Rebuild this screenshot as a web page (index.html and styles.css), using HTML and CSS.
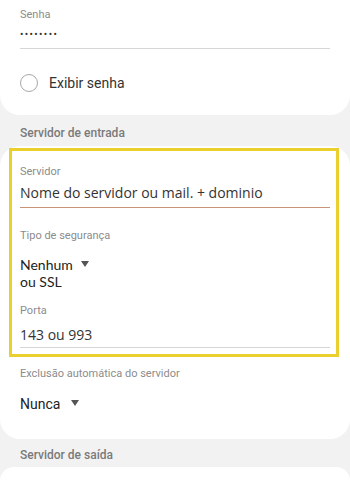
FILE: index.html
```html
<html><head>
  <title>Configurações da conta</title>
  <link rel="stylesheet" href="styles.css">
</head>
<body>
<div class="card topCard">
  <div class="field">
    <div class="label">Senha</div>
    <div class="dots">••••••••</div>
  </div>
  <div class="radioRow">
    <span class="radio"></span>
    <span class="radioText">Exibir senha</span>
  </div>
</div>

<div class="sectionTitle">Servidor de entrada</div>

<div class="card">
  <!-- moldura amarela de destaque -->
  <div class="highlight">
    <div class="label first">Servidor</div>
    <div class="value underlined active">Nome do servidor ou mail. + dominio</div>

    <div class="label gapLabel">Tipo de segurança</div>
    <div class="dropdown security">
      <span>Nenhum</span><span class="arrow"></span>
    </div>
    <div class="extra">ou SSL</div>

    <div class="label portLabel">Porta</div>
    <div class="value underlined port">143 ou 993</div>
  </div>

  <div class="inner">
    <div class="label deleteLabel">Exclusão automática do servidor</div>
    <div class="dropdown never">
      <span>Nunca</span><span class="arrow"></span>
    </div>
  </div>
</div>

<div class="sectionTitle second">Servidor de saída</div>

<div class="card lastCard"></div>
</body></html>
```

FILE: styles.css
```css
body {
  margin: 0;
  background-color: #f2f2f2;
  font-family: Roboto, "Liberation Sans", sans-serif;
  color: #222;
}

.card {
  background-color: #fff;
  border-radius: 20px;
}

.topCard {
  border-radius: 0 0 20px 20px;
  height: 115px;
  padding: 0 20px;
  box-sizing: border-box;
  overflow: hidden;
}

.label {
  font-size: 11px;
  line-height: 14px;
  color: #8c8c8c;
}

.field {
  padding-top: 8px;
  padding-bottom: 5px;
  border-bottom: 1px solid #d6d6d6;
}

.dots {
  margin-top: 5px;
  font-size: 10px;
  line-height: 16px;
  letter-spacing: 1.4px;
  color: #333;
}

.radioRow {
  display: flex;
  align-items: center;
  height: 24px;
  margin-top: 22px;
}

.radio {
  width: 16px;
  height: 16px;
  border: 1.5px solid #a8a8a8;
  border-radius: 50%;
  margin-right: 11px;
}

.radioText {
  font-size: 14px;
  color: #333;
}

.sectionTitle {
  padding: 11px 20px 6px;
  font-size: 12px;
  line-height: 14px;
  font-weight: 500;
  color: #7a7a7a;
}

.sectionTitle.second {
  padding: 9px 20px 5px;
}

.highlight {
  position: relative;
  top: 2px;
  margin: 0 11px 0 9px;
  border: 3px solid #ebcf2f;
  padding: 0 6px 6px 8px;
}

.label.first {
  padding-top: 14px;
}

.value {
  font-family: "Open Sans", "Noto Sans", sans-serif;
  font-size: 14px;
  line-height: 20px;
  color: #333;
}

.value.active {
  margin-top: 4px;
  padding-bottom: 4px;
  border-bottom: 1px solid #c9937a;
}

.label.gapLabel {
  margin-top: 21px;
}

.dropdown {
  display: flex;
  align-items: center;
  font-size: 14px;
  line-height: 16px;
  color: #222;
}

.dropdown.security {
  margin-top: 13px;
  font-family: Lato, "Open Sans", sans-serif;
  line-height: 17px;
}

.arrow {
  width: 0;
  height: 0;
  border-left: 4px solid transparent;
  border-right: 4px solid transparent;
  border-top: 6px solid #555;
  margin-left: 8px;
  margin-bottom: 2px;
}

.extra {
  font-family: Lato, "Open Sans", sans-serif;
  font-size: 14px;
  line-height: 17px;
  color: #222;
}

.label.portLabel {
  margin-top: 14px;
}

.value.port {
  margin-top: 7px;
  padding-bottom: 2px;
  border-bottom: 1px solid #d6d6d6;
}

.inner {
  padding: 0 20px 25px;
}

.label.deleteLabel {
  padding-top: 12px;
}

.dropdown.never {
  margin-top: 13px;
  line-height: 20px;
}

.dropdown.never .arrow {
  margin-left: 11px;
}

.lastCard {
  height: 14px;
  border-radius: 20px 20px 0 0;
}
```
